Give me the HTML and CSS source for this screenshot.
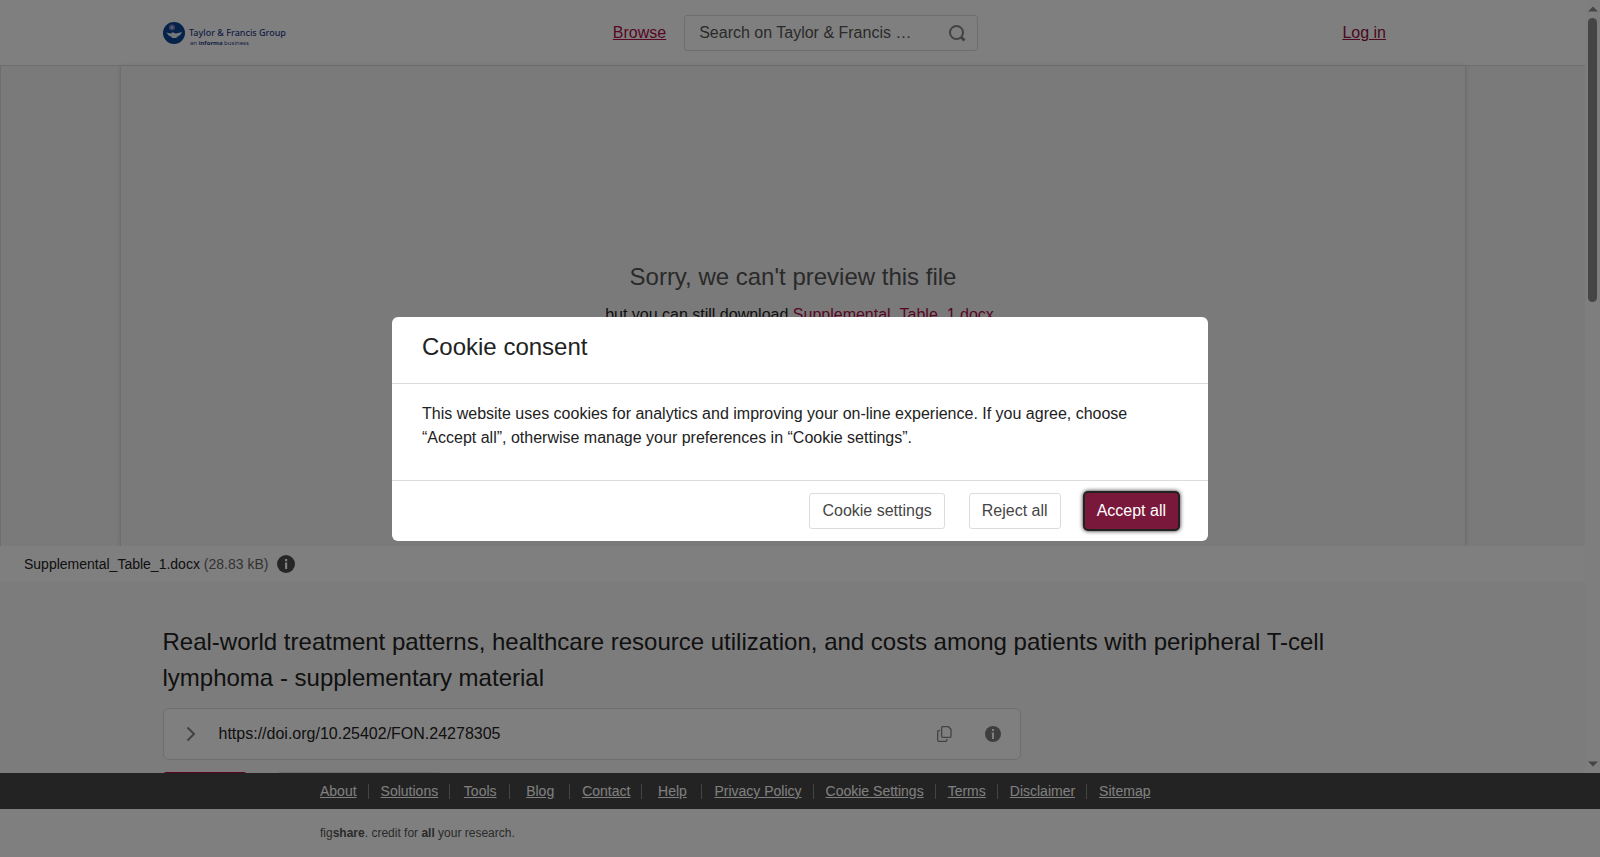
FILE: index.html
```html
<!DOCTYPE html>
<html lang="en">
<head>
<meta charset="utf-8">
<title>Real-world treatment patterns - Taylor &amp; Francis Group</title>
<link rel="stylesheet" href="styles.css">
</head>
<body>
<div class="viewport">
  <div class="page">
    <header class="header">
      <a class="logo" href="#" aria-label="Taylor &amp; Francis Group">
        <svg class="logo-mark" viewBox="0 0 22 22" aria-hidden="true">
          <circle cx="11" cy="11" r="11" fill="#0a4595"/>
          <circle cx="9" cy="5.500" r="3" fill="#6d7fc0"/>
          <circle cx="9" cy="5.500" r="1.300" fill="#cdbfe0"/>
          <path d="M3 10.500l4.500 1 2.500-1.300 2.500 1.300 4-.8 2.500-1-1 2.300c-1.500 2-3 2.600-5 3l1.500 1H8l1.500-1C7 14.600 5.300 13.500 4.600 12z" fill="#e8f1fa"/>
        </svg>
        <span class="logo-words">
          <span class="logo-name">Taylor &amp; Francis Group</span>
          <span class="logo-sub">an <b>informa</b> business</span>
        </span>
      </a>
      <div class="header-center">
        <a class="browse" href="#">Browse</a>
        <form class="search" role="search">
          <input class="search-input" type="text" aria-label="Search" placeholder="Search on Taylor &amp; Francis …">
          <button class="icon-button" type="button" aria-label="Submit search">
            <svg width="18" height="18" viewBox="0 0 18 18" fill="none" stroke="#848484" stroke-width="2"><circle cx="8.500" cy="8.500" r="6.500"/><path d="M13 13l3.500 3.500" stroke-width="3"/></svg>
          </button>
        </form>
      </div>
      <a class="login" href="#">Log in</a>
    </header>
    <main>
      <section class="viewer">
        <div class="viewer-slide">
          <h2 class="viewer-title">Sorry, we can't preview this file</h2>
          <p class="viewer-text">but you can still download <a href="#">Supplemental_Table_1.docx</a></p>
        </div>
      </section>
      <div class="filebar">
        <p>Supplemental_Table_1.docx <span class="filesize">(28.83 kB)</span></p>
        <button class="icon-button" type="button" aria-label="File details">
          <svg width="18" height="18" viewBox="0 0 18 18"><circle cx="9" cy="9" r="9" fill="#4d4d4d"/><path d="M8 4h2.200v2.200H8zM8 7.500h2.200V14H8z" fill="#fff"/></svg>
        </button>
      </div>
      <section class="item">
        <h1 class="item-title">Real-world treatment patterns, healthcare resource utilization, and costs among patients with peripheral T-cell lymphoma - supplementary material</h1>
        <div class="doi">
          <button class="icon-button" type="button" aria-label="Expand">
            <svg width="10" height="16" viewBox="0 0 10 16" fill="none" stroke="#848484" stroke-width="2"><path d="M1.500 1.500L8 8l-6.500 6.500"/></svg>
          </button>
          <span class="doi-text">https://doi.org/10.25402/FON.24278305</span>
          <button class="icon-button" type="button" aria-label="Copy DOI">
            <svg width="16" height="16" viewBox="0 0 16 16" fill="none" stroke="#848484" stroke-width="1.300"><path d="M5.600.7h5.800L14 3.300v7a1 1 0 0 1-1 1H5.600a1 1 0 0 1-1-1V1.700a1 1 0 0 1 1-1z"/><path d="M3 4.700H1.700a1 1 0 0 0-1 1v8.600a1 1 0 0 0 1 1h7.100a1 1 0 0 0 1-1v-1.200"/></svg>
          </button>
          <button class="icon-button" type="button" aria-label="About DOI">
            <svg width="16" height="16" viewBox="0 0 16 16"><circle cx="8" cy="8" r="8" fill="#7d7d7d"/><path d="M7 3h2v2H7zM6.500 6.500H9V13H7V7.500h-.5z" fill="#fff"/></svg>
          </button>
        </div>
        <div class="actions">
          <button class="action action-primary" type="button" aria-label="Download"></button>
          <button class="action action-share" type="button" aria-label="Share"></button>
        </div>
      </section>
    </main>
  </div>
  <div class="scrollbar" aria-hidden="true">
    <svg width="10" height="6" viewBox="0 0 10 6"><path d="M0 5.500L5 .5l5 5z" fill="#8a8a8a"/></svg>
    <div class="scroll-track"><div class="scroll-thumb"></div></div>
    <svg width="10" height="6" viewBox="0 0 10 6"><path d="M0 .5h10l-5 5z" fill="#8a8a8a"/></svg>
  </div>
</div>
<footer class="footer">
  <nav class="footer-nav">
    <ul>
      <li><a href="#">About</a></li>
      <li><a href="#">Solutions</a></li>
      <li><a href="#">Tools</a></li>
      <li><a href="#">Blog</a></li>
      <li><a href="#">Contact</a></li>
      <li><a href="#">Help</a></li>
      <li><a href="#">Privacy Policy</a></li>
      <li><a href="#">Cookie Settings</a></li>
      <li><a href="#">Terms</a></li>
      <li><a href="#">Disclaimer</a></li>
      <li><a href="#">Sitemap</a></li>
    </ul>
  </nav>
  <p class="tagline">fig<b>share</b>. credit for <b>all</b> your research.</p>
</footer>
<div class="overlay">
  <div class="dialog" role="dialog" aria-modal="true" aria-labelledby="consent-title">
    <h2 class="dialog-title" id="consent-title">Cookie consent</h2>
    <p class="dialog-body">This website uses cookies for analytics and improving your on-line experience. If you agree, choose “Accept all”, otherwise manage your preferences in “Cookie settings”.</p>
    <div class="dialog-footer">
      <button class="button" type="button">Cookie settings</button>
      <button class="button" type="button">Reject all</button>
      <button class="button button-primary" type="button">Accept all</button>
    </div>
  </div>
</div>
</body>
</html>
```

FILE: styles.css
```css
* { box-sizing: border-box; }

body {
  margin: 0;
  height: 100vh;
  display: flex;
  flex-direction: column;
  overflow: hidden;
  background: #fff;
  color: #222;
  font: 16px/24px "Liberation Sans", Arial, sans-serif;
}

h1, h2, p, ul { margin: 0; padding: 0; font-weight: 400; }
button, input { font: inherit; }
svg { display: block; }

.viewport { flex: 1; min-height: 0; display: flex; }
.page { flex: 1; min-width: 0; overflow: hidden; background: #f9f9f9; }

.header {
  display: grid;
  grid-template-columns: 1fr auto 1fr;
  align-items: center;
  padding: 15px 163px 14px;
  background: #fff;
  border-bottom: 1px solid #dcdcdc;
}
.logo { display: flex; gap: 4px; padding-top: 2px; color: #2b3e8c; text-decoration: none; }
.logo-mark { width: 22px; height: 22px; }
.logo-words {
  display: flex;
  flex-direction: column;
  padding-top: 4px;
  font-family: "Noto Sans", "Open Sans", sans-serif;
}
.logo-name { font-size: 9px; line-height: 13px; font-weight: 500; }
.logo-sub { font-size: 6px; line-height: 8px; padding-left: 1px; }
.header-center { display: flex; align-items: center; gap: 18px; padding-left: 6px; }
.browse { color: #b00c48; }
.login { justify-self: end; margin-right: 36px; color: #96103f; }
.search {
  display: flex;
  align-items: center;
  width: 294px;
  height: 36px;
  padding: 0 11px 0 14px;
  border: 1px solid #dcdcdc;
  border-radius: 3px;
}
.search-input { flex: 1; min-width: 0; padding: 0; border: 0; outline: 0; background: none; }
.search-input::placeholder { color: #555; opacity: 1; }
.icon-button { padding: 0; border: 0; background: none; }

.viewer {
  height: 480px;
  padding: 0 119px;
  background: #f4f4f4;
  border-left: 1px solid #dcdcdc;
}
.viewer-slide {
  height: 100%;
  padding-top: 193px;
  border-left: 1px solid #dcdcdc;
  border-right: 1px solid #dcdcdc;
  box-shadow: 0 0 4px #d4d4d4;
  text-align: center;
}
.viewer-title { font-size: 24px; line-height: 36px; color: #555; }
.viewer-text { padding: 8px 0 0 13px; }
.viewer-text a { color: #b00c48; text-decoration: none; }

.filebar {
  position: relative;
  display: flex;
  align-items: center;
  gap: 9px;
  height: 36px;
  padding: 0 24px;
  background: #fff;
  font-size: 14px;
}
.filesize { color: #666; }

.item { max-width: 1260px; margin: 0 auto; padding-top: 42px; }
.item-title { font-size: 24px; line-height: 36px; }
.doi {
  display: flex;
  align-items: center;
  width: 858px;
  max-width: 100%;
  height: 52px;
  margin-top: 12px;
  padding: 0 19px 0 22px;
  background: #fff;
  border: 1px solid #dcdcdc;
  border-radius: 6px;
}
.doi .icon-button + .icon-button { margin-left: 32px; }
.doi-text { flex: 1; padding-left: 23px; }
.actions { display: flex; gap: 30px; margin-top: 12px; }
.action { width: 84px; height: 36px; border: 1px solid #dcdcdc; border-radius: 3px; background: #fff; }
.action-primary { background: #b00c48; border-color: #b00c48; }
.action-share { width: 164px; }

.scrollbar {
  display: flex;
  flex-direction: column;
  align-items: center;
  width: 15px;
  padding: 6px 0;
  background: #fcfcfc;
}
.scroll-track { flex: 1; padding: 6px 0; }
.scroll-thumb { width: 9px; height: 38.6%; border-radius: 5px; background: #8a8a8a; }

.footer { background: #fff; }
.footer-nav { padding: 11px 308px 10px; background: #464646; font-size: 14px; }
.footer-nav ul { display: flex; list-style: none; }
.footer-nav li {
  min-width: 60px;
  padding: 0 11px 0 12px;
  border-right: 1px solid #888;
  line-height: 15px;
  text-align: center;
  white-space: nowrap;
}
.footer-nav li:last-child { border-right: 0; }
.footer-nav a { color: #fff; }
.tagline { padding: 12px 320px; font-size: 12px; color: #555; }

.overlay {
  position: fixed;
  inset: 0;
  display: flex;
  align-items: center;
  justify-content: center;
  background: rgba(0, 0, 0, .5);
}
.dialog { width: 816px; max-width: 100%; background: #fff; border-radius: 6px; }
.dialog-title {
  padding: 12px 30px 18px;
  border-bottom: 1px solid #dcdcdc;
  font-size: 24px;
  line-height: 36px;
}
.dialog-body { padding: 18px 30px 30px; }
.dialog-footer {
  display: flex;
  justify-content: flex-end;
  gap: 24px;
  padding: 12px 30px;
  border-top: 1px solid #dcdcdc;
}
.button {
  height: 36px;
  padding: 0 12px;
  border: 1px solid #dcdcdc;
  border-radius: 3px;
  background: #fff;
  color: #464646;
}
.button-primary {
  border: 0;
  background: #7a183c;
  color: #fff;
  box-shadow: 0 0 0 2px #222, 0 0 4px 2px #222;
}
```
